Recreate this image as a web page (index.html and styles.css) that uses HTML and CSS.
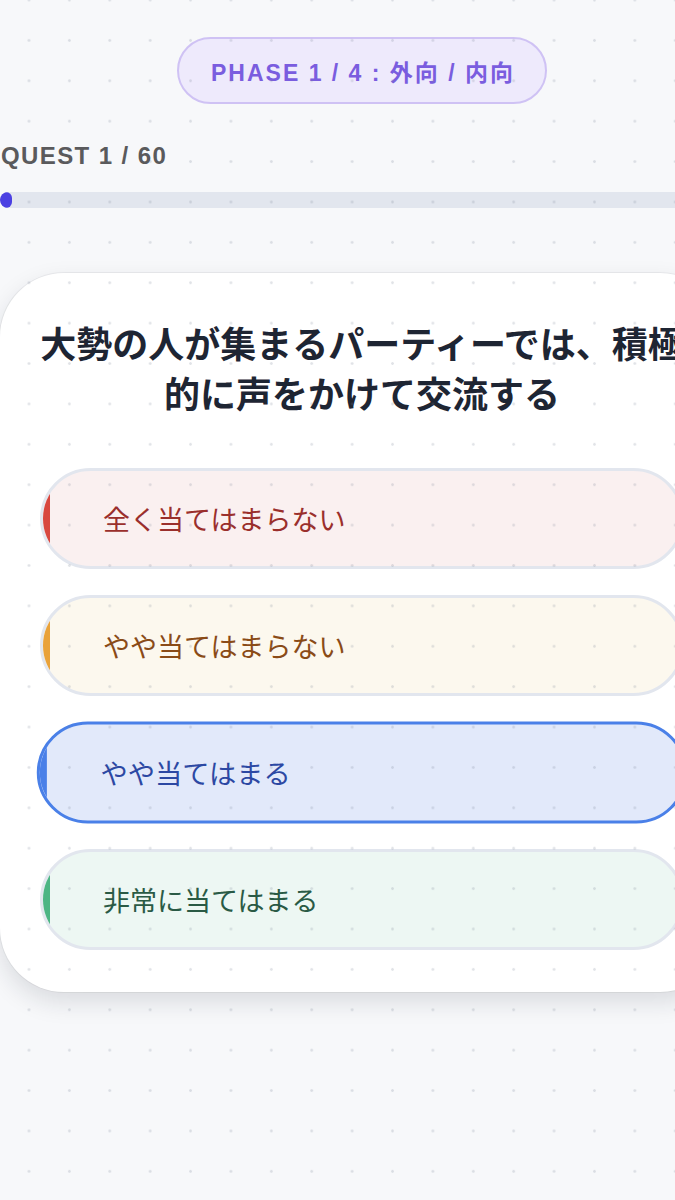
FILE: index.html
```html
<!DOCTYPE html>
<html lang="ja">
<head>
<meta charset="utf-8">
<title>Quest</title>
<link rel="stylesheet" href="styles.css">
</head>
<body>
<div class="app">
  <div class="phase">PHASE 1 / 4 : 外向 / 内向</div>
  <div class="quest">QUEST 1 / 60</div>
  <div class="progress"><div class="progress-fill" style="width:12px"></div></div>
  <div class="card">
    <h1 class="question">大勢の人が集まるパーティーでは、積極的に声をかけて交流する</h1>
    <div class="options">
      <div class="option opt-red">全く当てはまらない</div>
      <div class="option opt-yellow">やや当てはまらない</div>
      <div class="option opt-blue selected">やや当てはまる</div>
      <div class="option opt-green">非常に当てはまる</div>
    </div>
  </div>
</div>
<div class="dots"></div>
</body>
</html>
```
FILE: styles.css
```css
html, body {
  margin: 0;
  padding: 0;
  overflow: hidden;
}
body {
  background: #f7f8fa;
  font-family: "Noto Sans CJK JP", "Liberation Sans", sans-serif;
  min-height: 1200px;
}
.app {
  width: 724px;
  padding-top: 37px;
  display: flex;
  flex-direction: column;
}
.phase {
  align-self: center;
  height: 67px;
  width: 370px;
  box-sizing: border-box;
  display: flex;
  align-items: center;
  justify-content: center;
  padding-left: 2px;
  border: 2px solid #cfc2f4;
  border-radius: 40px;
  background: #eeeafc;
  color: #7a5ddf;
  font-family: "Liberation Sans", "Noto Sans CJK JP", sans-serif;
  font-weight: 700;
  font-size: 23px;
  letter-spacing: 2px;
}
.quest {
  margin-top: 38px;
  padding-left: 1px;
  font-family: "Liberation Sans", sans-serif;
  font-weight: 700;
  font-size: 24px;
  line-height: 28px;
  letter-spacing: 1.4px;
  color: #5a5a5c;
}
.progress {
  margin-top: 22px;
  height: 16px;
  background: #e2e6ee;
  border-radius: 8px;
  overflow: hidden;
}
.progress-fill {
  height: 100%;
  background: #4b40e2;
  border-radius: 8px;
}
.card {
  margin-top: 65px;
  background: #ffffff;
  border-radius: 64px;
  padding: 44px 40px 42px;
  box-shadow: 0 10px 24px rgba(20, 30, 50, 0.13), 0 0 0 1px rgba(0, 0, 0, 0.05);
}
.question {
  margin: 0 -4px 51px;
  text-align: center;
  font-size: 36px;
  line-height: 50px;
  font-weight: 700;
  color: #1e2533;
}
.options {
  display: flex;
  flex-direction: column;
  gap: 26px;
}
.option {
  position: relative;
  overflow: hidden;
  height: 101px;
  box-sizing: border-box;
  border: 3px solid #e2e6ee;
  border-radius: 51px;
  padding-left: 60px;
  display: flex;
  align-items: center;
  font-size: 27px;
  font-weight: 400;
}
.option::before {
  content: "";
  position: absolute;
  left: 0;
  top: 0;
  bottom: 0;
  width: 7px;
}
.opt-red { background: #faf0f0; color: #9a2f2c; }
.opt-red::before { background: #d8483f; }
.opt-yellow { background: #fcf8ee; color: #8a4b17; }
.opt-yellow::before { background: #e9a23a; }
.opt-blue { background: #e2e9fa; color: #2c48a3; }
.opt-blue::before { background: #4a80e8; }
.opt-green { background: #edf7f3; color: #2a5a45; }
.opt-green::before { background: #4db584; }
.selected {
  border-color: #4a80e8;
  transform: scale(1.01);
}
.dots {
  position: fixed;
  inset: 0;
  pointer-events: none;
  background-image: radial-gradient(circle, rgba(120, 130, 150, 0.22) 1.1px, transparent 1.6px);
  background-size: 40.4px 40.4px;
  background-position: 8.8px -20.2px;
}
```
